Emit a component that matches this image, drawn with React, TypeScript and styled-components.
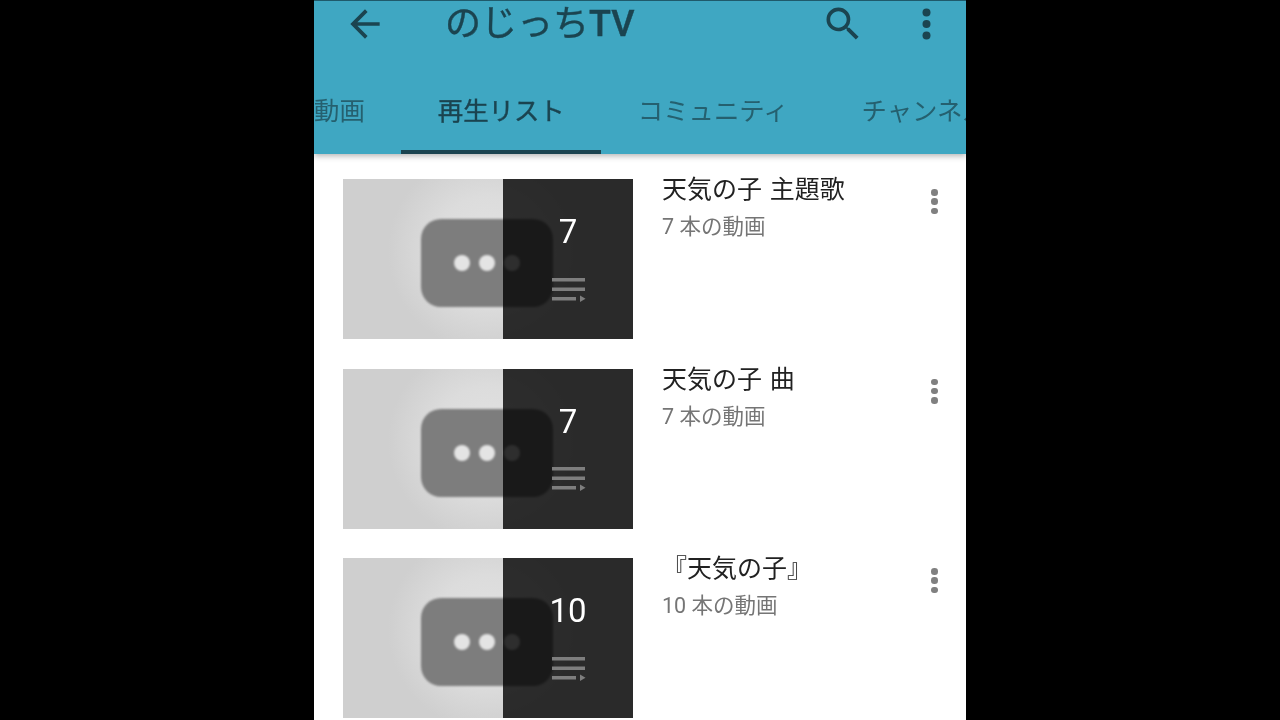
import React from 'react'
import styled, { createGlobalStyle } from 'styled-components'

const GlobalStyle = createGlobalStyle`
  html, body {
    margin: 0;
    height: 100%;
    background: #000;
    overflow: hidden;
  }
`

const Phone = styled.div`
  width: 652px;
  height: 720px;
  margin: 0 auto;
  background: #fff;
  overflow: hidden;
  filter: blur(0.4px);
  font-family: Roboto, 'Noto Sans CJK JP', sans-serif;
`

const Header = styled.header`
  height: 154px;
  box-sizing: border-box;
  background: #3fa7c2;
  border-top: 1px solid #1f5a6b;
  box-shadow: 0 2px 6px rgba(0, 0, 0, 0.3);
  position: relative;
  display: flex;
  flex-direction: column;
`

const TopBar = styled.div`
  height: 46px;
  display: flex;
  align-items: center;
  padding: 0 35px 0 29px;
  color: #1b4450;
`

const IconSlot = styled.div<{ $mr?: number }>`
  display: flex;
  margin-right: ${({ $mr }) => $mr ?? 0}px;
`

const Title = styled.div`
  flex: 1;
  font-size: 36px;
  font-weight: 400;
  -webkit-text-stroke: 0.4px #1b4450;
  white-space: nowrap;
  line-height: 48px;
`

const TitleLatin = styled.span`
  font-weight: 500;
`

const Tabs = styled.div`
  flex: 1;
  display: flex;
  overflow: hidden;
  margin-left: -36.5px;
`

const Tab = styled.div<{ $active?: boolean }>`
  padding: 0 36.5px 21px;
  flex-shrink: 0;
  height: 107px;
  box-sizing: border-box;
  display: flex;
  align-items: flex-end;
  line-height: 36px;
  font-size: 25.4px;
  color: ${({ $active }) => ($active ? '#1b4450' : '#25606f')};
  -webkit-text-stroke: ${({ $active }) => ($active ? '0.4px #1b4450' : '0')};
  border-bottom: 4px solid ${({ $active }) => ($active ? '#1b4450' : 'transparent')};
`

const List = styled.div`
  display: flex;
  flex-direction: column;
  gap: 29.5px;
  padding: 25px 0 0 29px;
`

const Row = styled.div`
  display: flex;
  height: 160px;
`

const Thumb = styled.div`
  width: 290px;
  height: 160px;
  flex-shrink: 0;
  position: relative;
  overflow: hidden;
  background: radial-gradient(ellipse 100px 100px at 50% 45%, #e2e2e2 0%, #dcdcdc 55%, #cfcfcf 100%);
  display: flex;
  align-items: center;
  justify-content: center;
`

const Pill = styled.div`
  width: 132px;
  height: 88px;
  margin: 8px 2px 0 0;
  border-radius: 20px;
  background: #7d7d7d;
  filter: blur(1.2px);
  display: flex;
  align-items: center;
  justify-content: center;
  gap: 9px;
`

const Dot = styled.div`
  width: 16px;
  height: 16px;
  border-radius: 50%;
  background: #e4e4e4;
`

const Overlay = styled.div`
  position: absolute;
  top: 0;
  right: 0;
  bottom: 0;
  width: 130px;
  background: rgba(0, 0, 0, 0.8);
  display: flex;
  flex-direction: column;
  align-items: center;
  color: #fff;
`

const Count = styled.div`
  font-family: Roboto, sans-serif;
  font-size: 33px;
  font-weight: 400;
  line-height: 40px;
  margin-top: 33px;
`

const QueueIcon = styled.svg`
  margin: 25.5px 0 0 2px;
`

const Info = styled.div`
  flex: 1;
  padding: 0 0 0 29px;
  display: flex;
  flex-direction: column;
`

const RowTitle = styled.div`
  font-size: 25px;
  word-spacing: 1.5px;
  line-height: 36px;
  margin-top: -7px;
  color: #212121;
  white-space: pre;
`

const RowSub = styled.div`
  font-size: 21.5px;
  line-height: 36px;
  padding-top: 1px;
  color: #757575;
`

const RowMenu = styled.div`
  width: 35px;
  padding-top: 10px;
  display: flex;
  flex-direction: column;
  align-items: flex-start;
`

const MenuDot = styled.div`
  width: 6.5px;
  height: 6.5px;
  border-radius: 50%;
  background: #808080;
  margin-bottom: 2.8px;
`

const playlists = [
  { title: '天気の子 主題歌', count: '7' },
  { title: '天気の子 曲', count: '7' },
  { title: '『天気の子』', count: '10' },
]

const App = () => (
  <>
    <GlobalStyle />
    <Phone>
      <Header>
        <TopBar>
          <IconSlot $mr={58}>
            <svg width="44" height="44" viewBox="0 0 24 24" fill="#1b4450">
              <path d="M20 11H7.83l5.59-5.59L12 4l-8 8 8 8 1.41-1.41L7.83 13H20v-2z" />
            </svg>
          </IconSlot>
          <Title>
            のじっち<TitleLatin>TV</TitleLatin>
          </Title>
          <IconSlot $mr={57}>
            <svg width="44" height="44" viewBox="0 0 24 24" fill="#1b4450">
              <path d="M15.5 14h-.79l-.28-.27A6.47 6.47 0 0 0 16 9.5 6.5 6.5 0 1 0 9.5 16c1.61 0 3.09-.59 4.23-1.57l.27.28v.79l5 4.99L20.49 19l-4.99-5zm-6 0C7.01 14 5 11.99 5 9.5S7.01 5 9.5 5 14 7.01 14 9.5 11.99 14 9.5 14z" />
            </svg>
          </IconSlot>
          <IconSlot>
            <svg width="9" height="32" viewBox="0 0 9 32" fill="#1b4450">
              <circle cx="4.5" cy="4.5" r="4" />
              <circle cx="4.5" cy="16" r="4" />
              <circle cx="4.5" cy="27.5" r="4" />
            </svg>
          </IconSlot>
        </TopBar>
        <Tabs>
          <Tab>動画</Tab>
          <Tab $active>再生リスト</Tab>
          <Tab>コミュニティ</Tab>
          <Tab>チャンネル</Tab>
        </Tabs>
      </Header>
      <List>
        {playlists.map((item) => (
          <Row key={item.title}>
            <Thumb>
              <Pill>
                <Dot />
                <Dot />
                <Dot />
              </Pill>
              <Overlay>
                <Count>{item.count}</Count>
                <QueueIcon width="34" height="26" viewBox="0 0 34 26" fill="#7e7e7e">
                  <rect x="0" y="0" width="33" height="3.5" />
                  <rect x="0" y="9.5" width="33" height="3.5" />
                  <rect x="0" y="19" width="24" height="3.5" />
                  <path d="M28 17.5l5.5 3.2-5.5 3.2z" />
                </QueueIcon>
              </Overlay>
            </Thumb>
            <Info>
              <RowTitle>{item.title}</RowTitle>
              <RowSub>{item.count} 本の動画</RowSub>
            </Info>
            <RowMenu>
              <MenuDot />
              <MenuDot />
              <MenuDot />
            </RowMenu>
          </Row>
        ))}
      </List>
    </Phone>
  </>
)

export default App
